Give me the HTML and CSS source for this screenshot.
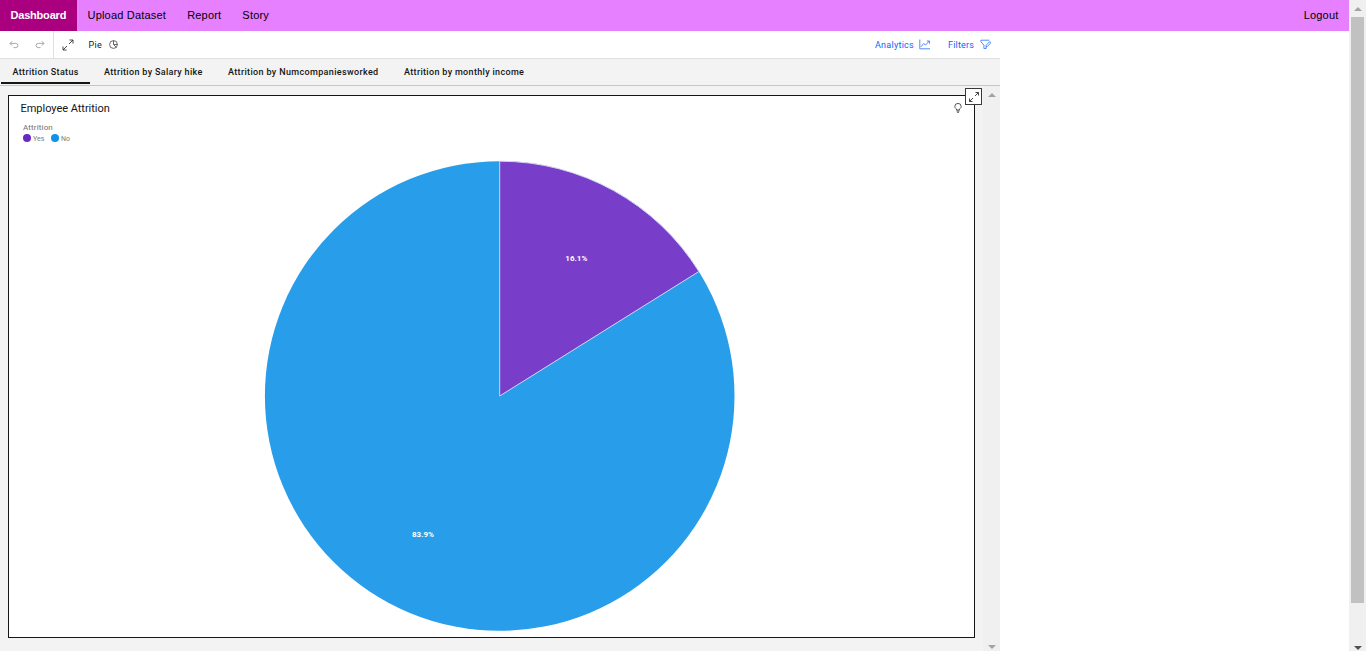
FILE: index.html
```html
<!DOCTYPE html>
<html lang="en">
<head>
<meta charset="utf-8">
<title>Employee Attrition Dashboard</title>
<link rel="stylesheet" href="styles.css">
</head>
<body>
<div class="page">
  <div class="main">
    <nav class="nav">
      <a class="nav-link active">Dashboard</a>
      <a class="nav-link">Upload Dataset</a>
      <a class="nav-link">Report</a>
      <a class="nav-link">Story</a>
      <a class="nav-link logout">Logout</a>
    </nav>
    <section class="dashboard">
      <div class="toolbar">
        <div class="history">
          <svg class="undo" width="10" height="10" viewBox="0 0 10 10"><path d="M3.2 1.2 1 3.4l2.2 2.2M1 3.4h5.8a2.1 2.1 0 0 1 0 4.2H4.5"/></svg>
          <svg class="redo" width="10" height="10" viewBox="0 0 10 10"><path d="M6.8 1.2 9 3.4 6.8 5.6M9 3.4H3.2a2.1 2.1 0 0 0 0 4.2h2.3"/></svg>
        </div>
        <svg class="expand" width="12" height="12" viewBox="0 0 12 12"><path d="M7.5 1H11v3.500M11 1 7 5M5 7l-4 4M1 7.500V11h3.500"/></svg>
        <span class="chart-type">Pie</span>
        <svg class="pie-icon" width="9" height="9" viewBox="0 0 9 9"><path d="M4.5.6a3.9 3.9 0 1 0 3.9 3.9A3.9 3.9 0 0 0 4.5.6v3.9h3.9M4.5 4.5l2.700 2.700"/></svg>
        <span class="tool analytics">Analytics</span>
        <svg class="blue" width="12" height="11" viewBox="0 0 12 11"><path d="M.8.5v9.300H11M2 7.800l2.600-3.300L6.600 6l3.700-4M7.800 2h2.700v2.700"/></svg>
        <span class="tool filters">Filters</span>
        <svg class="blue" width="11" height="11" viewBox="0 0 11 11"><path d="M9.200 1.200H.9v1.600l3 3.300v3.400h2.300V7.600M9.800 2.500 6 6.300v1.300h1.300l3.200-3.400z"/></svg>
      </div>
      <div class="tabs">
        <div class="tab t1 selected"><span>Attrition Status</span></div>
        <div class="tab t2"><span>Attrition by Salary hike</span></div>
        <div class="tab t3"><span>Attrition by Numcompaniesworked</span></div>
        <div class="tab t4"><span>Attrition by monthly income</span></div>
      </div>
      <div class="canvas">
        <div class="canvas-body">
          <article class="card">
            <h1>Employee Attrition</h1>
            <div class="legend-title">Attrition</div>
            <div class="legend"><i class="dot yes"></i><span class="yes-label">Yes</span><i class="dot no"></i><span class="no-label">No</span></div>
            <svg class="bulb" width="8" height="10" viewBox="0 0 8 10"><path d="M2.500 7V6C1.300 5.200.8 4.500.8 3.600a3.200 3.200 0 0 1 6.400 0c0 .9-.5 1.600-1.700 2.400v1zM2.500 8h3M3 9.300h2"/></svg>
            <div class="card-expand"><svg class="expand" width="12" height="12" viewBox="0 0 12 12"><path d="M7.500 1.500h3v3M10.500 1.500 7 5M5 7l-3.500 3.500M1.500 7.500v3h3"/></svg></div>
            <svg class="chart" width="472" height="472" viewBox="0 0 472 472">
              <circle cx="235.700" cy="236" r="234.800" fill="#289dea"/>
              <path d="M235.700 236V1.200A234.800 234.800 0 0 1 434.900 111.500Z" fill="#783dc9" stroke="#d5d6f2"/>
              <text x="301.300" y="101" textLength="22">16.1%</text>
              <text x="148" y="377" textLength="22">83.9%</text>
            </svg>
          </article>
        </div>
        <div class="inner-scroll"><i class="arrow up"></i><i class="arrow down"></i></div>
      </div>
    </section>
  </div>
  <div class="page-scroll"><i class="arrow up"></i><div class="thumb"></div><i class="arrow down dark"></i></div>
</div>
</body>
</html>
```
FILE: styles.css
```css
* { box-sizing: border-box; }
body { margin: 0; background: #fff; overflow: hidden; font-family: Roboto, sans-serif; color: #161616; }
.page { display: flex; width: 1366px; height: 651px; }
.main { width: 1349px; }
.nav { height: 31px; display: flex; background: #e680ff; }
.nav-link { font: 11px/31px "Liberation Sans", sans-serif; padding: 0 10.5px; color: #000; letter-spacing: .2px; white-space: nowrap; }
.active { background: #aa0080; color: #fff; font-weight: bold; width: 77px; letter-spacing: -.2px; }
.logout { margin-left: auto; }
.dashboard { width: 1000px; height: 620px; background: #f3f3f3; }
.toolbar { height: 28px; display: flex; align-items: center; background: #fff; border-bottom: 1px solid #e0e0e0; font-size: 9px; }
svg { flex: none; fill: none; }
.history { width: 54px; height: 27px; border-right: 1px solid #e0e0e0; display: flex; align-items: center; padding-left: 9px; gap: 16px; }
.undo, .redo { stroke: #a8a8a8; }
.toolbar .expand { margin-left: 7.5px; }
.expand { stroke: #333; stroke-width: .9; stroke-dasharray: none; }
.chart-type { margin-left: 15px; width: 20px; letter-spacing: .3px; }
.pie-icon { stroke: #444; stroke-width: .8; }
.tool { color: #0f62fe; }
.analytics { margin-left: auto; width: 44px; letter-spacing: .25px; }
.filters { margin-left: 17px; width: 32px; letter-spacing: .2px; }
.blue { stroke: #3d7eff; stroke-width: .9; }
.toolbar .blue:last-child { margin-right: 9px; }
.tabs { height: 27px; display: flex; border-bottom: 1px solid #c6c6c6; padding-left: 1px; }
.tab { height: 26px; padding-left: 12px; font: 500 9px/26px Roboto, sans-serif; white-space: nowrap; letter-spacing: .33px; }
.t1 { width: 89px; margin-right: 2px; padding-left: 11.5px; }
.t2 { width: 124px; }
.t3 { width: 176px; letter-spacing: .35px; }
.selected { border-bottom: 2px solid #161616; height: 25px; }
.canvas { display: flex; height: 565px; }
.canvas-body { width: 983px; padding: 9px 0 0 8px; }
.card { position: relative; width: 967px; height: 543px; border: 1px solid #161616; background: #fff; padding: 6px 0 0 11.5px; }
h1 { margin: 0; font: 11px/14px Roboto, sans-serif; letter-spacing: -.03px; }
.legend-title { margin: 7px 0 0 2.5px; font-size: 8px; line-height: 10px; color: #6f6f6f; letter-spacing: .15px; }
.legend { display: flex; align-items: center; height: 10px; margin-left: 2.5px; font-size: 7px; color: #7d7d7d; }
.yes-label, .no-label { padding-top: 2px; }
.dot { width: 8px; height: 8px; border-radius: 50%; margin-right: 2px; }
.yes { background: #6929c4; }
.no { background: #1192e8; }
.yes-label { width: 18px; }
.bulb { position: absolute; left: 944.5px; top: 7px; stroke: #444; stroke-width: .9; }
.card-expand { position: absolute; left: 956px; top: -8px; width: 17px; height: 17px; border: 1px solid #393939; background: #fff; display: flex; align-items: center; justify-content: center; }
.chart { position: absolute; left: 255px; top: 64px; }
.chart text { fill: #fff; font: bold 8px Roboto, sans-serif; }
.inner-scroll { width: 17px; background: #f0f0f0; display: flex; flex-direction: column; align-items: center; justify-content: space-between; padding: 7px 0 2px; }
.arrow { display: block; width: 0; height: 0; border: 4px solid transparent; }
.up { border-top: 0; border-bottom-color: #a3a3a3; }
.down { border-bottom: 0; border-top-color: #a3a3a3; }
.dark { border-top-color: #505050; margin-top: auto; }
.page-scroll { width: 17px; background: #f0f0f0; display: flex; flex-direction: column; align-items: center; padding: 7px 0 1px; }
.thumb { width: 13px; height: 586px; margin-top: 6px; background: #c1c1c1; }
```
